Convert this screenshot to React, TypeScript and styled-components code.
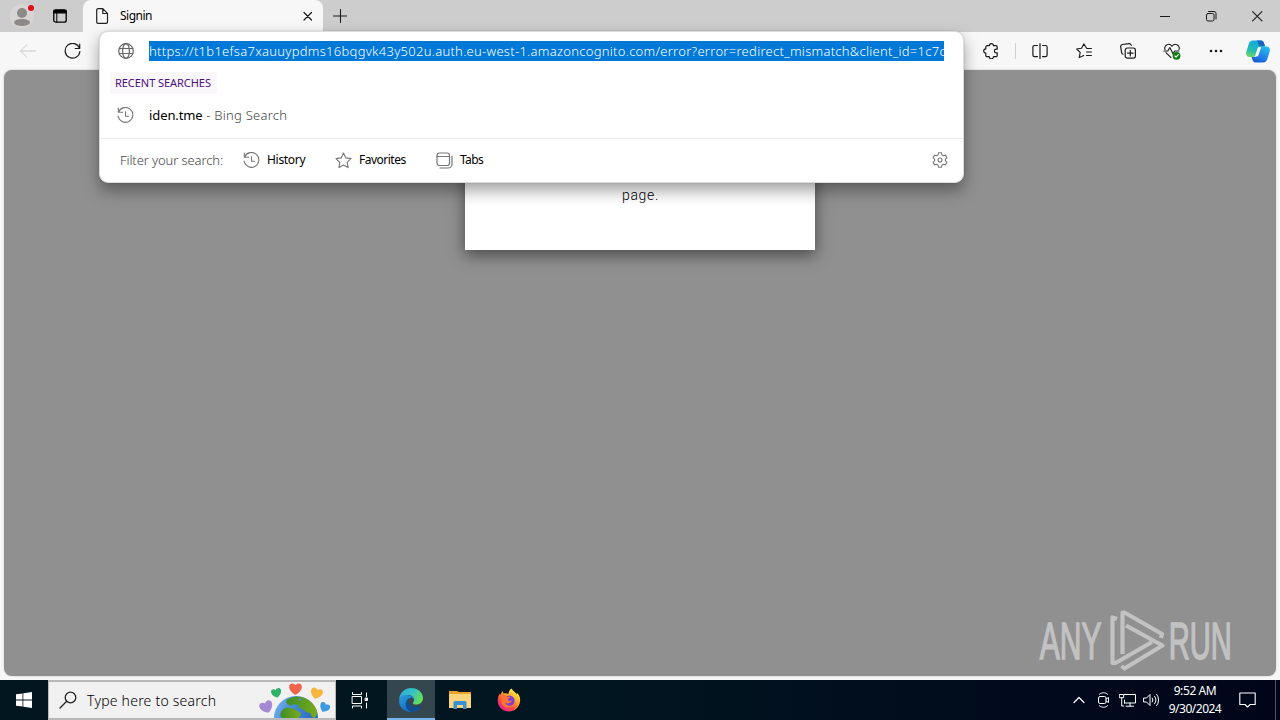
import React from 'react';
import styled, { createGlobalStyle } from 'styled-components';

const Global = createGlobalStyle`
  * { box-sizing: border-box; }
  body { margin: 0; overflow: hidden; font-family: "Noto Sans", "Open Sans", sans-serif; }
  svg { display: block; flex: none; }
`;

const Desktop = styled.div`
  width: 1280px;
  height: 720px;
  display: flex;
  flex-direction: column;
  position: relative;
  overflow: hidden;
  background: #f7f7f7;
`;

const Label = styled.span<{ $size: number; $spacing?: number; $color?: string; $weight?: number }>`
  font-size: ${(p) => p.$size}px;
  font-weight: ${(p) => p.$weight ?? 400};
  letter-spacing: ${(p) => p.$spacing ?? 0}px;
  color: ${(p) => p.$color ?? '#000'};
  line-height: 20px;
  white-space: pre;
`;

const TitleBar = styled.header`
  height: 32px;
  flex: none;
  display: flex;
  background: #cdcdcd;
`;

const Cell = styled.div<{ $w: number }>`
  width: ${(p) => p.$w}px;
  flex: none;
  display: flex;
  align-items: center;
  justify-content: center;
`;

const Tab = styled.div`
  width: 240px;
  margin-left: 1px;
  padding: 0 8px 0 12px;
  display: flex;
  align-items: center;
  background: #f7f7f7;
  border-radius: 8px 8px 0 0;
`;

const TabTitle = styled(Label)`
  flex: 1;
  margin-left: 11px;
`;

const Spacer = styled.div`
  flex: 1;
`;

const Toolbar = styled.nav`
  height: 38px;
  flex: none;
  display: flex;
  align-items: stretch;
  padding: 0 2px 0 6px;
`;

const Separator = styled.div`
  width: 1px;
  height: 16px;
  margin: 11px 2px;
  background: #d0d0d0;
`;

const Viewport = styled.main`
  height: 606px;
  flex: none;
  margin: 0 4px 4px;
  display: flex;
  justify-content: center;
  align-items: flex-start;
  border-radius: 8px;
  background: #909090;
  box-shadow: 0 0 2px rgba(0, 0, 0, 0.25);
  overflow: hidden;
`;

const Card = styled.section`
  width: 350px;
  height: 180px;
  padding: 115px 0 0 1px;
  background: #fff;
  text-align: center;
  box-shadow: 0 5px 15px rgba(0, 0, 0, 0.5);
`;

const CardText = styled.p`
  margin: 0;
  font-family: Roboto, "Liberation Sans", sans-serif;
  font-size: 14px;
  font-weight: 300;
  letter-spacing: 0.7px;
  line-height: 20px;
  color: #000;
`;

const Suggestions = styled.div`
  position: absolute;
  left: 99px;
  top: 31px;
  width: 865px;
  height: 152px;
  border: 1px solid #dcdcdc;
  border-radius: 9px;
  background: #fff;
  box-shadow: 0 8px 16px rgba(0, 0, 0, 0.36), 0 0 2px rgba(0, 0, 0, 0.18);
  display: flex;
  flex-direction: column;
`;

const AddressRow = styled.div`
  height: 38px;
  display: flex;
  align-items: center;
  padding: 0 19px 0 18px;
`;

const Selection = styled.div`
  width: 795px;
  height: 20px;
  margin-left: 15px;
  display: flex;
  align-items: center;
  overflow: hidden;
  background: #0078d7;
`;

const Heading = styled.div`
  width: 107px;
  height: 22px;
  margin: 2px 0 0 10px;
  padding-left: 5px;
  display: flex;
  align-items: center;
  background: #faf7fa;
`;

const ResultRow = styled.div`
  height: 44px;
  display: flex;
  align-items: center;
  padding: 0 0 2px 17px;
  gap: 15px;
`;

const FilterRow = styled.div`
  height: 44px;
  display: flex;
  align-items: center;
  border-top: 1px solid #ebebeb;
  padding: 0 15px 1px 20px;
`;

const Filter = styled.div<{ $w: number }>`
  width: ${(p) => p.$w}px;
  display: flex;
  align-items: center;
  gap: 7px;
`;

const FilterPrompt = styled(Label)`
  width: 123px;
`;

const Watermark = styled.div`
  position: absolute;
  left: 1030px;
  top: 604px;
`;

const Taskbar = styled.footer`
  height: 40px;
  flex: none;
  display: flex;
  background: linear-gradient(90deg, #01161e 0%, #011620 45%, #010a1c 80%, #00061a 100%);
`;

const SearchBox = styled.div`
  width: 288px;
  display: flex;
  align-items: center;
  padding-left: 10px;
  border: 2px solid #b8b8b8;
  border-right-width: 1px;
  border-left-width: 1px;
  background: #f1f1f1;
  overflow: hidden;
`;

const SearchLabel = styled(Label)`
  width: 173px;
  margin: 2px 0 0 10px;
`;

const AppButton = styled(Cell)<{ $active?: boolean }>`
  background: ${(p) => (p.$active ? '#34474e' : 'transparent')};
  border-bottom: 2px solid ${(p) => (p.$active ? '#76b5ea' : 'transparent')};
  padding-top: 2px;
`;

const Clock = styled.div`
  width: 64px;
  display: flex;
  flex-direction: column;
  align-items: center;
  padding-top: 2px;
`;

const ClockLine = styled(Label)`
  line-height: 18px;
`;

const ShowDesktop = styled.div`
  width: 5px;
  border-left: 1px solid #4c5468;
`;

type IconProps = { w?: number; h?: number; sw?: number; color?: string; children: React.ReactNode };
const Icon = ({ w = 16, h = w, sw = 1, color = '#1b1b1b', children }: IconProps) => (
  <svg width={w} height={h} viewBox={`0 0 ${w} ${h}`} fill="none" stroke={color} strokeWidth={sw} strokeLinecap="round" strokeLinejoin="round">
    {children}
  </svg>
);

const HistoryIcon = () => (
  <Icon w={17} color="#777" sw={1.1}>
    <path d="M1.3 1v4.2h4.3M1.6 5A7.4 7.4 0 1 1 1.1 9M8.5 4.8v4.4h3" />
  </Icon>
);

const Heart = ({ x, y, s, r, fill }: { x: number; y: number; s: number; r: number; fill: string }) => (
  <path
    d="M0 5.500C-3 4-6 1-6-2C-6-6-1.500-6 0-3.500C1.500-6 6-6 6-2C6 1 3 4 0 5.500Z"
    fill={fill}
    transform={`translate(${x} ${y}) rotate(${r}) scale(${s})`}
  />
);

const Earth = () => (
  <svg width="76" height="36" viewBox="0 0 76 36">
    <defs>
      <linearGradient id="sea" x1="0" x2="1" y1="0" y2="0.5">
        <stop offset="0" stopColor="#7cb6f2" />
        <stop offset="0.5" stopColor="#3f86d8" />
        <stop offset="1" stopColor="#2d66bb" />
      </linearGradient>
      <linearGradient id="land" x1="0" x2="1">
        <stop offset="0" stopColor="#3f8d25" />
        <stop offset="1" stopColor="#78ab1e" />
      </linearGradient>
      <clipPath id="globe"><circle cx="37" cy="36" r="22" /></clipPath>
    </defs>
    <circle cx="37" cy="36" r="22" fill="url(#sea)" />
    <g clipPath="url(#globe)">
      <path d="M27 19c2-3 9-5 16-4c8 2 13 6 16 15l-3 6l-3-1l-2-4l-4-1l-4-3l-3-1l-1-3l-4-1l-3 2l-4-2z" fill="url(#land)" />
      <path d="M40 16l3 2l-4 1z" fill="#4b90dc" />
      <path d="M22 30c2-4 7-6 11-3c4-1 5 3 9 4c0 3-2 4-3 5H23c-2-1-2-4-1-6z" fill="url(#land)" />
    </g>
    <Heart x={36.500} y={7} s={1.050} r={0} fill="#f0654c" />
    <Heart x={17.500} y={11} s={0.850} r={-15} fill="#2fb268" />
    <Heart x={57.500} y={11.500} s={1} r={15} fill="#f7b53b" />
    <Heart x={7.500} y={25} s={1.100} r={-22} fill="#a588d4" />
    <Heart x={65.500} y={25.500} s={0.850} r={28} fill="#3d9ae0" />
  </svg>
);

const EdgeLogo = () => (
  <svg width="24" height="24" viewBox="0 0 24 24">
    <defs>
      <linearGradient id="edgeTop" x1="0" x2="1" y1="0.2" y2="0.6">
        <stop offset="0" stopColor="#31a8dc" />
        <stop offset="0.5" stopColor="#35c1c3" />
        <stop offset="1" stopColor="#69df54" />
      </linearGradient>
      <linearGradient id="edgeSide" x1="0" x2="0.6" y1="0" y2="1">
        <stop offset="0" stopColor="#2ba0e0" />
        <stop offset="1" stopColor="#1268bd" />
      </linearGradient>
    </defs>
    <path d="M0.2 11C1 4.200 6 0 12 0c7 0 12 4.700 12 10c0 4-3 6.500-6.600 6.500c-3 0-4-1.200-3.300-2.100c.7-.9 1-1.600 1-2.700C15 8.700 12 7 8.700 7C5 7 2 8.500.2 11z" fill="url(#edgeTop)" />
    <path d="M0.100 12.500C0.300 8.300 4.200 6.500 8.200 7c4 .2 6.700 2.200 6.900 4.700c-1-1.600-2.600-2.200-4.200-1.800c-3.400 1.600-5 5-3.800 8.300c.8 2.500 2.900 4.700 5.400 5.700C5.200 24.400-.2 19 .1 12.500z" fill="url(#edgeSide)" />
    <path d="M9 11.200C4.500 16 8 23 13.500 23.900c4 0 7.200-2.200 9-5.500c.2-.5-.2-.7-.6-.4C15.500 21 8.200 17.500 9 11.200z" fill="#124c91" />
  </svg>
);

const FolderLogo = () => (
  <svg width="22" height="19" viewBox="0 0 22 19">
    <path d="M0 0h8l2 1h12v4H0z" fill="#e9a328" />
    <path d="M0 3h21a1 1 0 0 1 1 1v13H0z" fill="#f9d67c" />
    <path d="M4.500 18v-6.500a1.500 1.500 0 0 1 1.500-1.500h10a1.500 1.500 0 0 1 1.500 1.500V18h-3.500v-4h-6V18z" fill="#3a92d4" />
  </svg>
);

const FirefoxLogo = () => (
  <svg width="24" height="24" viewBox="0 0 24 24">
    <defs>
      <linearGradient id="fox" x1="0.8" x2="0.2" y1="0.1" y2="0.9">
        <stop offset="0" stopColor="#fff04a" />
        <stop offset="0.4" stopColor="#ff9a2a" />
        <stop offset="0.7" stopColor="#ff4a45" />
        <stop offset="1" stopColor="#e8218c" />
      </linearGradient>
    </defs>
    <path d="M14.500 0.500c1.500 2.500 4 3.500 5 6l.3-1.800C22.500 7 23.500 10 23 13.500C22.300 19.500 17.500 23.500 12 23.500C5.500 23.500.7 18.800.7 12.500c0-3 1-5.500 2-7l.4 1.700C4 5 5 4 6 3l.4 2.500c2-.4 3.600-.3 5 .4C11.800 3.500 12.500 1.500 14.500.5z" fill="url(#fox)" />
    <circle cx="12.300" cy="12.800" r="5.300" fill="#7b3fd4" />
    <path d="M4.500 8.500c2-1.400 4.500-1 6 .2l2.800.2c-.2 1.300-2.300 1.500-2.600 2.200c.2 2 2.700 2.500 4.300 1.200c-.8 3-4.500 4-7 2.200c1.500 3.500 6 4.500 9 1.500c-2 4.500-8 5-11 1.500C4 15 3.500 11 4.500 8.500z" fill="#ff7430" />
  </svg>
);

const CopilotLogo = () => (
  <svg width="24" height="23" viewBox="0 0 24 23">
    <defs>
      <linearGradient id="cpA" x1="0.5" x2="0.2" y1="0" y2="1">
        <stop offset="0" stopColor="#14a7e3" />
        <stop offset="0.6" stopColor="#24bfae" />
        <stop offset="1" stopColor="#72d764" />
      </linearGradient>
      <linearGradient id="cpB" x1="0.7" x2="0.2" y1="0" y2="1">
        <stop offset="0" stopColor="#22bce9" />
        <stop offset="0.5" stopColor="#2388e8" />
        <stop offset="1" stopColor="#1458d5" />
      </linearGradient>
    </defs>
    <path d="M7 .5h8c2 0 2.600 1.300 3.200 3.200L19 6.500h-3.500c-2 0-3 1-3.600 3l-1.600 4.700C9.700 16 8.700 17 7 17H3.500C.5 17-.4 14.500.3 12l2.400-8C3.400 1.700 4.500.5 7 .5z" fill="url(#cpA)" />
    <path d="M10.500.5H15c2 0 2.600 1.300 3.200 3.200L19 6.500h-4c-1.300 0-2-.8-2.400-2C12 2.500 11.700 1.300 10.500.5z" fill="#1667b8" />
    <path d="M17 22.500H9.500c-2 0-2.600-1.300-3.200-3.200L5.600 17h3c2 0 3-1 3.600-3l1.600-4.500c.6-1.800 1.600-3 3.300-3h3.400c3 0 3.900 2.500 3.200 5L21.300 19c-.7 2.300-1.800 3.500-4.300 3.500z" fill="url(#cpB)" />
    <path d="M13.500 7.500L10.500 16" stroke="#f7f7f7" strokeWidth="3" />
  </svg>
);

const AnyRun = () => (
  <svg width="220" height="76" viewBox="1030 604 220 76" fill="#c2c2c2" stroke="#c2c2c2">
    <g strokeWidth="1.500" fontFamily='"Liberation Sans", sans-serif' fontSize="52">
      <text transform="translate(1039.700 659) scale(0.578 1)">ANY</text>
      <text transform="translate(1168.800 659) scale(0.560 1)">RUN</text>
    </g>
    <g fill="none" strokeWidth="4.200" strokeLinejoin="round">
      <path d="M1117 619l-4.500-1.500V663h3L1152 642" />
      <path d="M1122.500 654V612.500h2L1162 634l-1 4" />
      <path d="M1126 625.500L1162.500 645.500L1124.500 668.500l-3-2.500" />
    </g>
  </svg>
);

const url =
  'https://t1b1efsa7xauuypdms16bqgvk43y502u.auth.eu-west-1.amazoncognito.com/error?error=redirect_mismatch&client_id=1c7c';

export default function App() {
  return (
    <Desktop>
      <Global />
      <TitleBar>
        <Cell $w={44}>
          <svg width="24" height="24" viewBox="0 0 24 24">
            <circle cx="12" cy="12" r="12" fill="#d7d5d3" />
            <circle cx="12" cy="9" r="5" fill="#8c8987" />
            <path d="M4 19c0-3 3.500-4 8-4s8 1 8 4c-2 4-14 4-16 0z" fill="#8c8987" />
            <circle cx="21" cy="4" r="3" fill="#e30d18" />
          </svg>
        </Cell>
        <Cell $w={32}>
          <Icon w={14} sw={1.3} color="#000">
            <rect x="0.800" y="0.800" width="12.400" height="12.400" rx="2" />
            <path d="M1 1.500h12v2.300H1z" fill="#000" />
            <path d="M3.800 4v9" strokeWidth="1" />
          </Icon>
        </Cell>
        <Cell $w={6} />
        <Tab>
          <Icon w={14} h={16} sw={1.2} color="#222">
            <path d="M3 .7h4.800l4.700 4.700v8.600a1.300 1.300 0 0 1-1.300 1.300H3A1.300 1.300 0 0 1 1.700 14V2A1.300 1.300 0 0 1 3 .7zM7.800 1v4.500h4.500" />
          </Icon>
          <TabTitle $size={12} $spacing={-0.5}>Signin</TabTitle>
          <Icon w={14} sw={1.2}><path d="M3 3.500l7.500 7.500M10.500 3.500l-7.500 7.500" /></Icon>
        </Tab>
        <Cell $w={34}>
          <Icon w={14} sw={1.1}><path d="M7.500 .5v13M.5 7h14" /></Icon>
        </Cell>
        <Spacer />
        <Cell $w={46}><Icon w={10}><path d="M0 5.500h10" /></Icon></Cell>
        <Cell $w={46}>
          <Icon w={11}><rect x="0.500" y="2.500" width="7.500" height="7.500" rx="1.500" /><path d="M2.500 .5h5.500a2 2 0 0 1 2 2V8" /></Icon>
        </Cell>
        <Cell $w={46}><Icon w={11} sw={1.1}><path d="M.6.600l9.300 9.300M9.900.6L.6 9.900" /></Icon></Cell>
      </TitleBar>

      <Toolbar>
        <Cell $w={44}><Icon w={16} color="#c9c9c9"><path d="M.5 8h15M7 1.500L.5 8L7 14.500" /></Icon></Cell>
        <Cell $w={44}><Icon w={17} sw={1.2}><path d="M15.500 5.200A7.400 7.400 0 1 0 15.900 8.500M15.700 1v4.500h-4.500" /></Icon></Cell>
        <Spacer />
        <Cell $w={44}>
          <Icon w={16} sw={1.2}>
            <path d="M4 2.700h2.300a2.100 2.100 0 0 1 4.200 0H13a1.200 1.200 0 0 1 1.200 1.200v2.300h-1a1.800 1.800 0 0 0 0 3.600h1v2.700a1.200 1.200 0 0 1-1.200 1.200h-2.500a2.100 2.100 0 0 1-4.200 0H4a1.200 1.200 0 0 1-1.200-1.200V10.100a2.100 2.100 0 0 1 0-4.200V3.900A1.200 1.200 0 0 1 4 2.700z" />
          </Icon>
        </Cell>
        <Separator />
        <Cell $w={43}>
          <Icon w={16} sw={1.2}><path d="M5.500 2.500H2.500a1.600 1.600 0 0 0-1.600 1.600v8a1.600 1.600 0 0 0 1.600 1.600H5.500M10.500 2.500h3a1.600 1.600 0 0 1 1.600 1.600v8a1.600 1.600 0 0 1-1.600 1.600H10.500M8 .6v15" /></Icon>
        </Cell>
        <Cell $w={45}>
          <Icon w={16} sw={1.1}>
            <path d="M15.500 5.500h-4.700L7.800.9L5.500 5.200L.6 6l3.600 3.400l-1 5.200L7.800 12.500M10.500 9h5M10.500 12.500h5" />
          </Icon>
        </Cell>
        <Cell $w={44}>
          <Icon w={16} sw={1.200}>
            <rect x="5.200" y="5" width="10.200" height="10.200" rx="2.200" />
            <path d="M10.300 7.300v5.600M7.500 10.100h5.600M3 11.300A2 2 0 0 1 1.600 9.700L.7 4A2.200 2.200 0 0 1 2.400 1.500L9 .6a2.200 2.200 0 0 1 2.300 1.800" />
          </Icon>
        </Cell>
        <Cell $w={44}>
          <Icon w={18} h={17} sw={1.1}>
            <path d="M2 6.500C.6 2 6.300-.8 9 3.300C11.700-.8 17.400 2 16 6.500M3 9.700l5 5M.8 8h4l2-3.500l3.200 6.200L11.700 8H16" />
            <circle cx="13.500" cy="12.800" r="3.900" fill="#0d7a12" stroke="none" />
            <path d="M11.900 13l1.100 1.100l2.300-2.500" stroke="#fff" />
          </Icon>
        </Cell>
        <Cell $w={44}>
          <Icon w={14} h={4}><g fill="#1b1b1b" stroke="none"><circle cx="2" cy="2" r="1.300" /><circle cx="7" cy="2" r="1.300" /><circle cx="12" cy="2" r="1.300" /></g></Icon>
        </Cell>
        <Cell $w={40}><CopilotLogo /></Cell>
      </Toolbar>

      <Viewport>
        <Card><CardText>page.</CardText></Card>
      </Viewport>

      <Taskbar>
        <Cell $w={48}>
          <svg width="16" height="16" viewBox="0 0 16 16" fill="#fff">
            <path d="M0 2.300L6.500 1.400V7.600H0zM7.300 1.300L16 0v7.600H7.300zM0 8.400h6.500v6.200L0 13.700zM7.300 8.400H16V16l-8.700-1.300z" />
          </svg>
        </Cell>
        <SearchBox>
          <Icon w={18} sw={1.3} color="#222"><circle cx="11.500" cy="6.500" r="5.300" /><path d="M7.700 10.300L1 17" /></Icon>
          <SearchLabel $size={14} $weight={300} $spacing={0.23} $color="#000">Type here to search</SearchLabel>
          <Earth />
        </SearchBox>
        <Cell $w={51}>
          <Icon w={21} h={17} color="#fff">
            <path d="M1.500.5v2h9v-2M1.500 16v-2h9v2M1.500 4.500h9v7h-9zM15.500 1v3.500M15.500 11v5" />
            <rect x="14.500" y="6" width="2" height="2.500" fill="#fff" />
          </Icon>
        </Cell>
        <AppButton $w={48} $active><EdgeLogo /></AppButton>
        <AppButton $w={50}><FolderLogo /></AppButton>
        <AppButton $w={48}><FirefoxLogo /></AppButton>
        <Spacer />
        <Cell $w={24}><Icon w={12} h={8} color="#fff" sw={1.2}><path d="M1 6.500L6 1.500l5 5" /></Icon></Cell>
        <Cell $w={24}>
          <Icon w={13} h={16} color="#fff"><rect x="1.500" y="4.500" width="7.500" height="7" rx="1.500" /><path d="M9 7l2.500-1.500v5L9 9M2.500 2.200C5 .2 8 .2 10.500 2.200M2.500 13.800c2.500 2 5.500 2 8 0" /></Icon>
        </Cell>
        <Cell $w={24}>
          <Icon w={17} h={14} color="#fff"><path d="M5.500 1.500h11v8.500h-11M5.500 10V7M11 10v3M7 13.200h7.500M.7 1.500h4v3.200h-4zM2.700 5v8h2" /></Icon>
        </Cell>
        <Cell $w={24}>
          <Icon w={17} h={14} color="#fff"><path d="M1 5h2.500L7 1.500v11L3.500 9H1zM9.300 5a3.500 3.500 0 0 1 0 4M11.500 3.200a6 6 0 0 1 0 7.600M13.700 1.400a9 9 0 0 1 0 11.200" /></Icon>
        </Cell>
        <Clock>
          <ClockLine $size={12} $spacing={-0.4} $color="#fff">9:52 AM</ClockLine>
          <ClockLine $size={12} $spacing={-0.5} $color="#fff">9/30/2024</ClockLine>
        </Clock>
        <Cell $w={41}>
          <Icon w={17} h={16} color="#fff" sw={1.1}><path d="M.8 1h15.400v11.500h-5L8.500 15L6 12.500H.8z" /></Icon>
        </Cell>
        <Cell $w={7} />
        <ShowDesktop />
      </Taskbar>

      <Suggestions>
        <AddressRow>
          <Icon w={16} sw={1.2} color="#666"><circle cx="8" cy="8" r="7.300" /><ellipse cx="8" cy="8" rx="3.400" ry="7.300" /><path d="M1.300 5.500h13.400M1.300 10.500h13.400" /></Icon>
          <Selection><Label $size={13} $weight={300} $spacing={0.28} $color="#fff">{url}</Label></Selection>
        </AddressRow>
        <Heading><Label $size={11} $spacing={-0.05} $color="#4b1080">RECENT SEARCHES</Label></Heading>
        <ResultRow>
          <HistoryIcon />
          <Label $size={13} $spacing={-0.1}>iden.tme<Label $size={13} $weight={300} $spacing={0.25} $color="#444"> - Bing Search</Label></Label>
        </ResultRow>
        <FilterRow>
          <FilterPrompt $size={13} $weight={300} $spacing={-0.1} $color="#444">Filter your search:</FilterPrompt>
          <Filter $w={92}><HistoryIcon /><Label $size={12} $spacing={-0.3}>History</Label></Filter>
          <Filter $w={101}>
            <Icon w={17} color="#777" sw={1.100}><path d="M8.500 1l2.300 4.900l5.200.7l-3.800 3.700l.9 5.300l-4.600-2.600l-4.600 2.600l.9-5.300L1 6.600l5.200-.7z" /></Icon>
            <Label $size={12} $spacing={-0.5}>Favorites</Label>
          </Filter>
          <Filter $w={90}>
            <Icon w={17} color="#777" sw={1.200}><rect x="1" y="1" width="12.500" height="12.500" rx="2.500" /><path d="M1 4.500h12.500M4 16h8a4 4 0 0 0 4-4V4" /></Icon>
            <Label $size={12} $spacing={-0.6}>Tabs</Label>
          </Filter>
          <Spacer />
          <Icon w={16} color="#777" sw={1.100}>
            <circle cx="8" cy="8" r="2" />
            <path d="M6.500.8h3l.5 2.200l1.300.8l2.200-.7l1.500 2.600L13.400 7.200v1.600L15 10.300l-1.500 2.600l-2.200-.7L10 13l-.5 2.200h-3L6 13l-1.300-.8l-2.200.7L1 10.300l1.600-1.500V7.200L1 5.700l1.500-2.600l2.200.7L6 3z" />
          </Icon>
        </FilterRow>
      </Suggestions>

      <Watermark><AnyRun /></Watermark>
    </Desktop>
  );
}
